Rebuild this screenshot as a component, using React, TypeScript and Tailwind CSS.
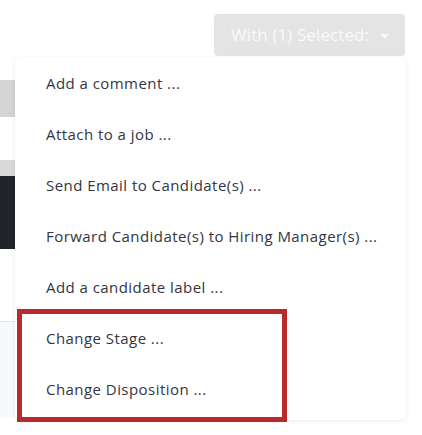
const actions = [
  'Add a comment ...',
  'Attach to a job ...',
  'Send Email to Candidate(s) ...',
  'Forward Candidate(s) to Hiring Manager(s) ...',
  'Add a candidate label ...',
  'Change Stage ...',
  'Change Disposition ...',
];

export default function App() {
  return (
    <div
      className="relative w-[422px] h-[435px] overflow-hidden bg-white"
      style={{ fontFamily: '"Open Sans", "Noto Sans", sans-serif' }}
    >
      {/* Header with bulk action button */}
      <div className="flex h-[80px] justify-end pr-[17px] pt-[14px]">
        <button className="flex h-[42px] w-[191px] items-center justify-between rounded-[4px] bg-[#e4e4e4] pl-[17px] pr-[16px] text-[17px] tracking-[0.1px] text-[#f9f9f9]">
          <span>With (1) Selected:</span>
          <svg width="9" height="5" viewBox="0 0 9 5" className="mt-[2px]">
            <path d="M0 0h9L4.5 5z" fill="#f9f9f9" />
          </svg>
        </button>
      </div>

      {/* Page content behind the menu (left column) */}
      <div className="w-[120px]">
        <div className="h-[37px] bg-[#d4d4d4]" />
        <div className="h-[43px]" />
        <div className="h-[16px] bg-[#d9d9d9]" />
        <div className="h-[73px] bg-[#212529]" />
        <div className="h-[72px]" />
        <div className="h-[96px] border-t border-[#e3e5e8] bg-[#f8f9fb]" />
      </div>

      {/* Dropdown menu */}
      <div className="absolute left-[15px] top-[58px] w-[391px] rounded-[5px] bg-white pb-[5px] shadow-[0_1px_5px_rgba(0,0,0,0.08)]">
        {actions.map((a) => (
          <div
            key={a}
            className="flex h-[51px] items-center pl-[31px] text-[15px] tracking-[0.45px] text-[#34353f]"
          >
            {a}
          </div>
        ))}
      </div>

      {/* Highlight annotation */}
      <div className="absolute left-[17px] top-[309px] h-[113px] w-[270px] border-[5px] border-[#b92b2b]" />
    </div>
  );
}
